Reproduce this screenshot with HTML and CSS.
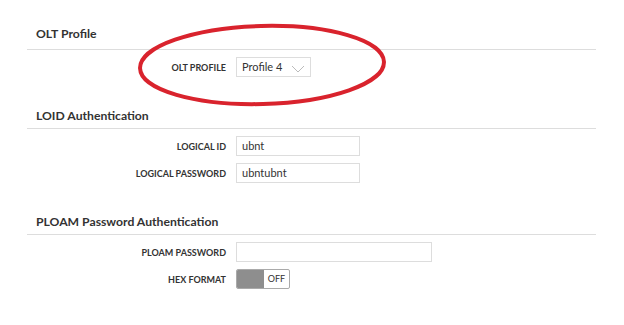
FILE: index.html
```html
<!DOCTYPE html>
<html lang="en">
<head>
  <meta charset="UTF-8">
  <title>ONU Settings</title>
  <link rel="stylesheet" href="styles.css">
</head>
<body>
  <div class="page">
    <div class="section">
      <h3 class="section-title first">OLT Profile</h3>
      <div class="row">
        <label>OLT Profile</label>
        <div class="select">Profile 4
          <svg class="caret" width="14" height="8" viewBox="0 0 14 8"><path d="M1 1l6 6 6-6" fill="none" stroke="#bbb" stroke-width="1"/></svg>
        </div>
      </div>
    </div>

    <div class="section">
      <h3 class="section-title">LOID Authentication</h3>
      <div class="row">
        <label>Logical ID</label>
        <div class="input">ubnt</div>
      </div>
      <div class="row">
        <label>Logical Password</label>
        <div class="input">ubntubnt</div>
      </div>
    </div>

    <div class="section">
      <h3 class="section-title">PLOAM Password Authentication</h3>
      <div class="row">
        <label>PLOAM Password</label>
        <div class="input wide"></div>
      </div>
      <div class="row">
        <label>Hex Format</label>
        <div class="toggle"><span class="knob"></span><span class="state">OFF</span></div>
      </div>
    </div>

    <!-- hand-drawn highlight -->
    <svg class="mark" width="260" height="90" viewBox="0 0 260 90">
      <ellipse cx="130" cy="45" rx="122" ry="39" fill="none" stroke="#d9232d" stroke-width="4" transform="rotate(-1.5 130 45)"/>
    </svg>
  </div>
</body>
</html>
```

FILE: styles.css
```css
body { margin: 0; background: #fff; font-family: Lato, "Open Sans", sans-serif; color: #333; }
.page { position: relative; width: 624px; height: 325px; padding-top: 24px; box-sizing: border-box; }
.section { margin: 0 28px 31px 27px; }
.section-title { margin: 0 0 7px; padding: 0 9px 4px; font-size: 12.2px; line-height: 16px; font-weight: bold; color: #333; border-bottom: 1px solid #ddd; }
.section-title.first { padding: 2px 9px 7px; }
.row { display: grid; grid-template-columns: 199px auto; column-gap: 10px; align-items: center; height: 20px; margin-bottom: 7px; }
.row:last-child { margin-bottom: 0; }
label { text-align: right; text-transform: uppercase; font-size: 9px; font-weight: bold; color: #333; }
.input, .select { box-sizing: border-box; height: 20px; border: 1px solid #ddd; padding: 0 5px; font-size: 11px; line-height: 18px; color: #333; }
.input { width: 124px; }
.input.wide { width: 196px; }
.select { width: 75px; display: flex; align-items: center; justify-content: space-between; }
.caret { margin-top: 3px; }
.toggle { display: flex; width: 54px; height: 20px; box-sizing: border-box; border: 1px solid #aaa; border-radius: 2px; overflow: hidden; }
.knob { width: 27px; background: #8e8e8e; }
.state { flex: 1; text-align: center; font-size: 9px; line-height: 18px; color: #333; }
.mark { position: absolute; left: 132px; top: 20px; }
```
